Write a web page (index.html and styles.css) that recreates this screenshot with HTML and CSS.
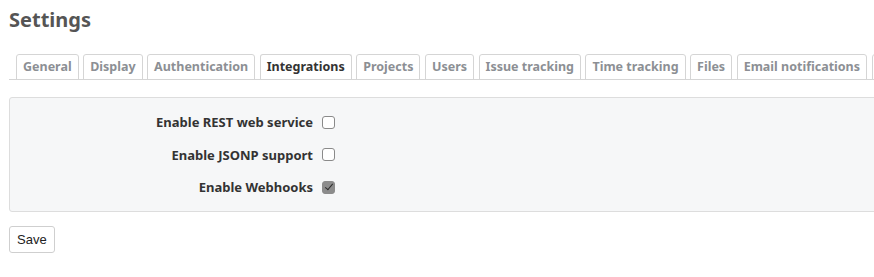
FILE: index.html
```html
<!DOCTYPE html>
<html lang="en">
<head>
  <meta charset="UTF-8" />
  <title>Settings</title>
  <link rel="stylesheet" href="styles.css">
</head>
<body>
  <div class="content">
    <h2>Settings</h2>

    <div class="tabs">
      <ul>
        <li><a href="#">General</a></li>
        <li><a href="#">Display</a></li>
        <li><a href="#">Authentication</a></li>
        <li><a href="#" class="selected">Integrations</a></li>
        <li><a href="#">Projects</a></li>
        <li><a href="#">Users</a></li>
        <li><a href="#">Issue tracking</a></li>
        <li><a href="#">Time tracking</a></li>
        <li><a href="#">Files</a></li>
        <li><a href="#">Email notifications</a></li>
        <li><a href="#" class="hidden-tab"></a></li>
      </ul>
    </div>

    <form>
      <div class="box tabular">
        <p><label for="rest">Enable REST web service</label><input type="checkbox" id="rest" /></p>
        <p><label for="jsonp">Enable JSONP support</label><input type="checkbox" id="jsonp" /></p>
        <p><label for="hooks">Enable Webhooks</label><input type="checkbox" id="hooks" checked /></p>
      </div>
      <button type="button" class="save">Save</button>
    </form>
  </div>
</body>
</html>
```

FILE: styles.css
```css
html, body {
  overflow: hidden;
}

body {
  margin: 0;
  font-family: "Noto Sans", "Open Sans", sans-serif;
  font-size: 13px;
  color: #333;
  background: #fff;
}

.content {
  width: 900px;
  padding: 0 0 0 9px;
}

h2 {
  margin: 0;
  padding-top: 5px;
  font-size: 20px;
  line-height: 30px;
  color: #555;
  font-weight: 700;
}

/* tabs */
.tabs {
  margin-top: 19px;
  border-bottom: 1px solid #d5d5d5;
  overflow: hidden;
}

.tabs ul {
  display: flex;
  gap: 4.5px;
  margin: 0;
  padding: 0 0 0 7px;
  list-style: none;
  white-space: nowrap;
}

.tabs li {
  margin-bottom: -1px;
}

.tabs a {
  display: block;
  padding: 0 6px;
  height: 24px;
  line-height: 23px;
  border: 1px solid #d5d5d5;
  border-radius: 3px 3px 0 0;
  background: #fff;
  color: #8c8f94;
  font-size: 12.5px;
  font-weight: 700;
  text-decoration: none;
}

.tabs a.selected {
  color: #333;
  border-bottom-color: #fff;
}

.tabs a.hidden-tab {
  width: 40px;
}

/* box */
.box {
  margin-top: 17px;
  padding: 8px 0 7px;
  background: #f6f7f8;
  border: 1px solid #dddddd;
  border-radius: 3px;
}

.tabular p {
  display: flex;
  align-items: center;
  margin: 0;
  height: 32.5px;
}

.tabular label {
  width: 303px;
  text-align: right;
  font-weight: 700;
  color: #333;
}

.tabular input[type="checkbox"] {
  appearance: none;
  width: 13px;
  height: 13px;
  margin: 0 0 0 9px;
  border: 1px solid #8a8a8a;
  border-radius: 3px;
  background: #fff;
  position: relative;
}

.tabular input[type="checkbox"]:checked {
  background: #8c8c8c;
  border-color: #8c8c8c;
}

.tabular input[type="checkbox"]:checked::after {
  content: "";
  position: absolute;
  left: 3.5px;
  top: 0.5px;
  width: 3px;
  height: 7px;
  border: solid #2b2b2b;
  border-width: 0 1.6px 1.6px 0;
  transform: rotate(40deg);
}

.save {
  margin-top: 14px;
  height: 27px;
  padding: 0 7px;
  font-family: "Liberation Sans", Arial, sans-serif;
  font-size: 13px;
  color: #222;
  background: #fff;
  border: 1px solid #cfcfcf;
  border-radius: 3px;
}
```
